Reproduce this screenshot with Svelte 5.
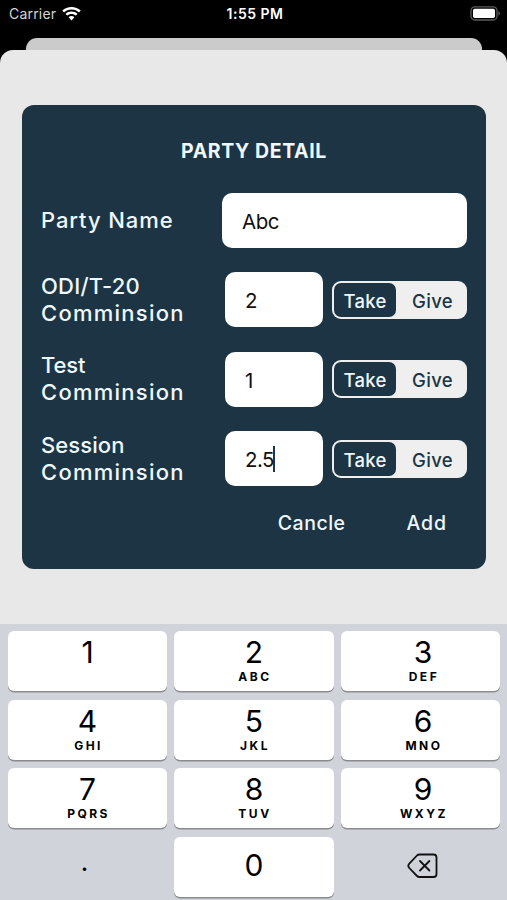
<script>
  const name = 'Abc';

  let rows = $state([
    { id: 'odi', label: 'ODI/T-20', value: '2', mode: 'Take', focused: false },
    { id: 'test', label: 'Test', value: '1', mode: 'Take', focused: false },
    { id: 'session', label: 'Session', value: '2.5', mode: 'Take', focused: true }
  ]);

  const keys = [
    { digit: '1', letters: '' },
    { digit: '2', letters: 'ABC' },
    { digit: '3', letters: 'DEF' },
    { digit: '4', letters: 'GHI' },
    { digit: '5', letters: 'JKL' },
    { digit: '6', letters: 'MNO' },
    { digit: '7', letters: 'PQRS' },
    { digit: '8', letters: 'TUV' },
    { digit: '9', letters: 'WXYZ' }
  ];

  function press(char) {
    const row = rows.find((r) => r.focused);
    if (row) row.value += char;
  }

  function erase() {
    const row = rows.find((r) => r.focused);
    if (row) row.value = row.value.slice(0, -1);
  }
</script>

<div class="screen">
  <header class="status">
    <div class="carrier">
      <span>Carrier</span>
      <svg width="19" height="14" viewBox="0 0 19 14" fill="#fff">
        <path d="M9.5 0C13 0 16.300 1.300 18.700 3.600L17 5.400C15 3.500 12.400 2.500 9.500 2.500S4 3.500 2 5.400L.3 3.600C2.700 1.300 6 0 9.500 0Z" />
        <path d="M9.500 4.500C11.800 4.500 13.900 5.300 15.500 6.900L13.800 8.600C12.700 7.500 11.200 6.900 9.500 6.900S6.300 7.500 5.200 8.600L3.500 6.900C5.100 5.300 7.200 4.500 9.500 4.500Z" />
        <path d="M9.500 9C10.600 9 11.600 9.400 12.400 10.200L9.500 13.400L6.600 10.200C7.400 9.400 8.400 9 9.500 9Z" />
      </svg>
    </div>
    <span class="time">1:55 PM</span>
    <svg class="battery" width="31" height="15" viewBox="0 0 31 15">
      <rect x="1" y=".8" width="26" height="13.200" rx="3.800" fill="none" stroke="#5c5c5c" stroke-width="1.300" />
      <rect x="3" y="2.800" width="22" height="9.200" rx="1.800" fill="#fff" />
      <path d="M28.500 5C30.300 5.800 30.300 9 28.500 9.800Z" fill="#6c6c6c" />
    </svg>
  </header>

  <div class="back-sheet"></div>

  <main class="sheet">
    <section class="card">
      <h1>PARTY DETAIL</h1>

      <div class="row">
        <div class="label">Party Name</div>
        <div class="field wide">{name}</div>
      </div>

      {#each rows as row (row.id)}
        <div class="row">
          <div class="label">
            <span class="kind {row.id}">{row.label}</span>
            <span class="commission">Comminsion</span>
          </div>
          <div class="field">
            {row.value}{#if row.focused}<i class="caret"></i>{/if}
          </div>
          <div class="segment">
            {#each ['Take', 'Give'] as mode}
              <button class:active={row.mode === mode} onclick={() => (row.mode = mode)}>{mode}</button>
            {/each}
          </div>
        </div>
      {/each}

      <div class="actions">
        <button class="cancel">Cancle</button>
        <button class="add">Add</button>
      </div>
    </section>
  </main>

  <footer class="keyboard">
    {#each keys as key}
      <button class="key" onclick={() => press(key.digit)}>
        <span class="digit">{key.digit}</span>
        <span class="letters">{key.letters}</span>
      </button>
    {/each}
    <button class="key plain" onclick={() => press('.')}><span class="dot">.</span></button>
    <button class="key zero" onclick={() => press('0')}><span class="digit">0</span></button>
    <button class="key plain delete" aria-label="Delete" onclick={erase}>
      <svg width="31" height="26" viewBox="0 0 31 26" fill="none" stroke="#111" stroke-width="1.800" stroke-linecap="round" stroke-linejoin="round">
        <path d="M12.500 1.500H26.500Q29.500 1.500 29.500 4.500V21Q29.500 24 26.500 24H12.500Q11 24 10 23L2.300 15Q.3 12.800 2.300 10.600L10 2.500Q11 1.500 12.500 1.500Z" />
        <path d="M13 8L22.400 17.500M22.400 8L13 17.500" />
      </svg>
    </button>
  </footer>
</div>

<style>
  :global(body) {
    margin: 0;
    background: #000;
  }

  .screen {
    display: flex;
    flex-direction: column;
    width: 507px;
    height: 900px;
    overflow: hidden;
    background: #000;
    font-family: Inter, 'Liberation Sans', sans-serif;
  }

  button {
    padding: 0;
    border: none;
    background: none;
    color: inherit;
    font: inherit;
    letter-spacing: inherit;
  }

  .status {
    display: grid;
    grid-template-columns: 1fr auto 1fr;
    align-items: center;
    box-sizing: border-box;
    height: 38px;
    padding: 0 6px 11px 9px;
    color: #fff;
    font-size: 14px;
  }

  .carrier {
    display: flex;
    align-items: center;
    gap: 6px;
    color: #d4d4d4;
    letter-spacing: 0.2px;
  }

  .time {
    font-weight: 600;
    letter-spacing: 0.5px;
  }

  .battery {
    justify-self: end;
  }

  .back-sheet {
    flex: none;
    height: 12px;
    margin: 0 25px 0 26px;
    border-radius: 11px 11px 0 0;
    background: #cbcbcb;
  }

  .sheet {
    flex: none;
    box-sizing: border-box;
    height: 574px;
    padding: 55px 21px 0 22px;
    border-radius: 13px 13px 0 0;
    background: #e8e8e8;
  }

  .card {
    box-sizing: border-box;
    height: 464px;
    padding: 34px 19px 0;
    border-radius: 12px;
    background: #1d3444;
    color: #eef7fc;
  }

  h1 {
    margin: 0 0 30px;
    font-size: 19.500px;
    font-weight: 700;
    line-height: 24px;
    letter-spacing: 0.600px;
    text-align: center;
  }

  .row {
    display: flex;
    align-items: center;
    height: 55px;
    margin-bottom: 24.400px;
  }

  .label {
    flex: 1;
    font-size: 22px;
    font-weight: 500;
    line-height: 27px;
    letter-spacing: 0.900px;
  }

  .label span {
    display: block;
  }

  .kind.odi {
    letter-spacing: 0.250px;
  }

  .kind.test {
    letter-spacing: -0.100px;
  }

  .kind.session {
    letter-spacing: 0.100px;
  }

  .commission {
    letter-spacing: 1.250px;
  }

  .field {
    display: flex;
    align-items: center;
    box-sizing: border-box;
    width: 98px;
    height: 55px;
    padding: 2px 0 0 20px;
    border-radius: 10px;
    background: #fff;
    color: #111;
    font-size: 20.500px;
    letter-spacing: -0.500px;
  }

  .field.wide {
    width: 245px;
  }

  .caret {
    width: 2px;
    height: 26px;
    margin: 0 0 2px -1px;
    background: #1d3444;
  }

  .segment {
    display: grid;
    grid-template-columns: 62px 1fr;
    gap: 4px;
    box-sizing: border-box;
    width: 135px;
    height: 38px;
    margin-left: 9px;
    padding: 2px;
    border-radius: 9px;
    background: #efefef;
    color: #1d3444;
    font-size: 18.500px;
    font-weight: 500;
    letter-spacing: 0.300px;
  }

  .segment button {
    padding-top: 2px;
  }

  .segment .active {
    border-radius: 7px;
    background: #1d3444;
    color: #eef7fc;
  }

  .actions {
    display: flex;
    justify-content: flex-end;
    padding-right: 20px;
    margin-top: -1px;
    font-size: 19.500px;
    font-weight: 500;
    line-height: 26px;
    letter-spacing: 0.500px;
  }

  .cancel {
    margin-right: 61px;
  }

  .add {
    letter-spacing: 0.900px;
  }

  .keyboard {
    flex: 1;
    display: grid;
    grid-template-columns: repeat(3, 1fr);
    grid-auto-rows: 60px;
    gap: 8.600px 7.300px;
    padding: 7px 7px 0 8px;
    background: #d0d3da;
  }

  .key {
    display: flex;
    flex-direction: column;
    align-items: center;
    border-radius: 6px;
    background: #fff;
    box-shadow: 0 1.500px 0 #898b8f;
    color: #000;
  }

  /* the right column's legends sit slightly off centre */
  .key:nth-child(3n) {
    padding-left: 5px;
  }

  .digit {
    margin-top: 3px;
    font-size: 30px;
    font-weight: 400;
    line-height: 36px;
  }

  .letters {
    font-size: 12px;
    font-weight: 700;
    line-height: 14px;
    letter-spacing: 2.500px;
    text-indent: 2px;
  }

  .zero .digit {
    margin-top: 10px;
  }

  .plain {
    justify-content: center;
    background: none;
    box-shadow: none;
  }

  .delete {
    padding-bottom: 2px;
  }

  .dot {
    margin: 0 6px 9px 0;
    font-size: 26px;
    line-height: 36px;
  }
</style>
